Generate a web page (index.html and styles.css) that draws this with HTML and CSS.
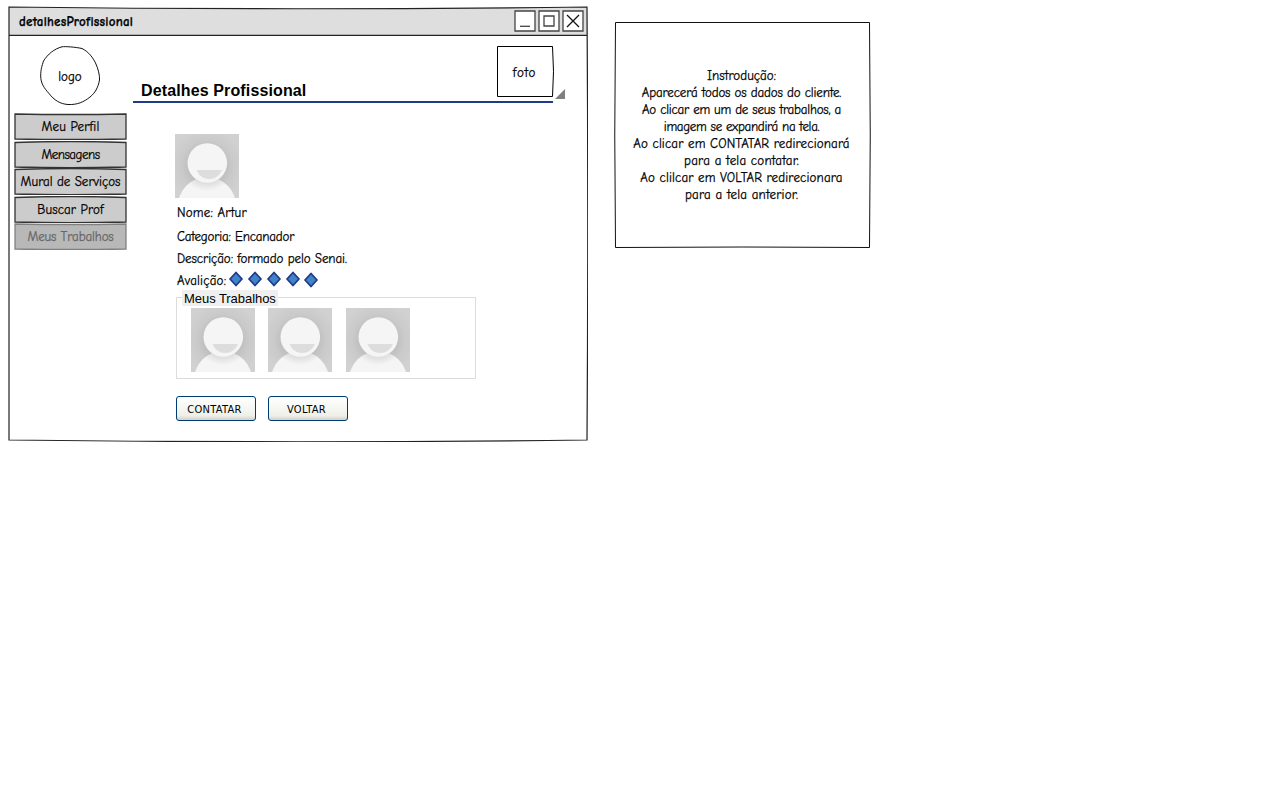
FILE: index.html
```html
<!DOCTYPE html>
<html lang="pt-BR">
<head>
<meta charset="utf-8">
<title>detalhesProfissional</title>
<link rel="stylesheet" href="styles.css">
</head>
<body>
<svg class="defs" width="0" height="0" aria-hidden="true">
  <defs>
    <radialGradient id="backdrop" gradientUnits="userSpaceOnUse" cx="32" cy="32" r="42">
      <stop offset="0.45" stop-color="#c0c0c0"/>
      <stop offset="0.62" stop-color="#cacaca"/>
      <stop offset="0.9" stop-color="#d1d1d1"/>
    </radialGradient>
    <radialGradient id="body" gradientUnits="userSpaceOnUse" cx="32" cy="30" r="32">
      <stop offset="0.6" stop-color="#dedede"/>
      <stop offset="0.85" stop-color="#f5f5f5"/>
    </radialGradient>
    <symbol id="avatar" viewBox="0 0 64 64">
      <rect width="64" height="64" fill="url(#backdrop)"/>
      <circle cx="32" cy="72" r="29" fill="url(#body)"/>
      <circle cx="32.300" cy="29" r="19.800" fill="#f5f5f5"/>
      <path d="M21.500 36 H47 C44 42 40 45 34.300 45 S24 42 21.500 36 Z" fill="#dddddd"/>
    </symbol>
    <symbol id="diamond" viewBox="0 0 16 16">
      <path d="M8 1.500 L14 8 L8 14.500 L2 8 Z" fill="#3f83cb" stroke="#223a85" stroke-width="1.800" stroke-linejoin="round"/>
    </symbol>
    <symbol id="plate" viewBox="0 0 113 27">
      <path d="M1 1 Q56 2 112 1 V26 Q56 27 1 26 Z"/>
    </symbol>
    <symbol id="plate-high" viewBox="0 0 113 27">
      <path d="M1 1.500 Q56 -.5 112 1.500 V26 Q56 27.500 1 26 Z"/>
    </symbol>
  </defs>
</svg>
<div class="board">
  <section class="window">
    <svg class="sketch" viewBox="8 6 580 436">
      <path d="M9 7 Q300 10.500 587 7 L587.500 35.500 H9 Z" fill="#dedede"/>
      <path d="M9 7 Q300 10.500 587 7 Q588.500 220 587 440 Q300 443.500 9 440 Z M9 35.300 H587.500" fill="none" stroke="#222" stroke-width="1.200"/>
    </svg>
    <header class="titlebar">
      <span class="hand caption">detalhesProfissional</span>
      <div class="controls">
        <svg viewBox="0 0 22 22"><path d="M1 1 H21 V21 H1 Z" class="key"/><path d="M6 16.300 H16" class="mark"/></svg>
        <svg viewBox="0 0 22 22"><path d="M1 1 H21 V21 H1 Z" class="key"/><path d="M6 6 H16 V16 H6 Z" class="mark"/></svg>
        <svg viewBox="0 0 22 22"><path d="M1 1 H21 V21 H1 Z" class="key"/><path d="M5 5 L17 17 M17 5 L5 17" class="mark cross"/></svg>
      </div>
    </header>
    <div class="content">
      <aside class="side">
        <div class="logo">
          <svg class="sketch" viewBox="0 0 60 60"><path d="M22 .8 C25 .3 35 1 42 2.500 C49 6 53 12 55.500 17 C58 22 60 30 59.500 34 C58 42 55 47 50 51 C44 56 37 59 28 58.500 C20 58 14 54 9 47.500 C4 42 .7 37 .7 30 C.7 23 2 20 3.500 15 C8 8 14 3 22 .8 Z" fill="#fff" stroke="#111"/></svg>
          <span class="hand">logo</span>
        </div>
        <nav class="menu">
          <a class="hand item w-perfil"><svg class="sketch"><use href="#plate"/></svg>Meu Perfil</a>
          <a class="hand item w-mensagens"><svg class="sketch"><use href="#plate-high"/></svg>Mensagens</a>
          <a class="hand item"><svg class="sketch"><use href="#plate-high"/></svg>Mural de Serviços</a>
          <a class="hand item w-buscar"><svg class="sketch"><use href="#plate-high"/></svg>Buscar Prof</a>
          <a class="hand item off w-trab"><svg class="sketch"><use href="#plate"/></svg>Meus Trabalhos</a>
        </nav>
      </aside>
      <main class="main">
        <div class="heading">
          <h1>Detalhes Profissional</h1>
          <div class="foto">
            <svg class="sketch" viewBox="0 0 57 52"><path d="M.5 .5 H55.500 Q57.500 25 55.500 50.500 H.5 Z" fill="#fff" stroke="#000"/></svg>
            <span class="hand w-foto">foto</span>
          </div>
          <svg class="grip" viewBox="0 0 10 10"><path d="M10 0 V10 H0 Z" fill="#808080"/></svg>
        </div>
        <div class="profile">
          <svg class="avatar"><use href="#avatar"/></svg>
          <p class="hand nome">Nome: Artur</p>
          <p class="hand categoria">Categoria: Encanador</p>
          <p class="hand descricao">Descrição: formado pelo Senai.</p>
          <div class="rating">
            <span class="hand">Avalição:</span>
            <svg><use href="#diamond"/></svg><svg><use href="#diamond"/></svg><svg><use href="#diamond"/></svg><svg><use href="#diamond"/></svg><svg class="last"><use href="#diamond"/></svg>
          </div>
          <section class="works">
            <h2>Meus Trabalhos</h2>
            <div class="thumbs">
              <svg class="avatar"><use href="#avatar"/></svg>
              <svg class="avatar"><use href="#avatar"/></svg>
              <svg class="avatar"><use href="#avatar"/></svg>
            </div>
          </section>
          <div class="actions">
            <button>CONTATAR</button>
            <button>VOLTAR</button>
          </div>
        </div>
      </main>
    </div>
  </section>
  <aside class="note">
    <svg class="sketch" viewBox="0 0 257 227"><path d="M1.500 .5 H255.500 Q257 113 255.500 225.500 Q128 224.500 1.500 225.500 Q0 113 1.500 .5 Z" fill="#fff" stroke="#111"/></svg>
    <p class="hand">
      <span class="n1">Instrodução:</span>
      <span class="n2">Aparecerá todos os dados do cliente.</span>
      <span class="n3">Ao clicar em um de seus trabalhos, a</span>
      <span class="n4">imagem se expandirá na tela.</span>
      <span class="n5">Ao clicar em CONTATAR redirecionará</span>
      <span class="n6">para a tela contatar.</span>
      <span class="n7">Ao clilcar em VOLTAR redirecionara</span>
      <span class="n8">para a tela anterior.</span>
    </p>
  </aside>
</div>
</body>
</html>
```
FILE: styles.css
```css
* { box-sizing: border-box; }
body { margin: 0; background: #fff; color: #000; }
h1, h2, p { margin: 0; font-weight: normal; }
.defs { display: block; }
.board { display: flex; align-items: flex-start; padding: 6px 8px; }
.hand { font: 13px/17px "Comic Sans MS", "Comic Neue", "Noto Sans", sans-serif; white-space: nowrap; -webkit-text-stroke: .25px currentColor; }
.sketch { position: absolute; inset: 0; width: 100%; height: 100%; z-index: -1; }
.window, .note, .logo, .foto, .item { position: relative; z-index: 0; }

.window { width: 580px; height: 436px; }
.titlebar { display: flex; justify-content: space-between; align-items: center; height: 30px; padding: 0 4px 0 11px; }
.caption { font-weight: bold; letter-spacing: .23px; }
.controls { display: flex; gap: 2px; }
.controls svg { display: block; width: 22px; height: 22px; }
.key { fill: #fff; stroke: #444; stroke-width: 1.3; }
.mark { fill: none; stroke: #444; stroke-width: 1.3; }
.cross { stroke: #111; }

.content { display: flex; }
.side { width: 125px; padding: 10px 6px 0; }
.logo { display: flex; align-items: center; justify-content: center; width: 60px; height: 60px; margin-left: 26px; }
.menu { display: flex; flex-direction: column; gap: .5px; width: 113px; margin-top: 7px; }
.item { display: flex; align-items: center; justify-content: center; height: 27px; fill: #ccc; stroke: #333; stroke-width: 1.3; }
.off { fill: #b8b8b8; stroke: #808080; color: #666; }
.w-perfil { letter-spacing: .17px; }
.w-mensagens { letter-spacing: -.5px; }
.w-buscar { letter-spacing: .1px; }
.w-trab { letter-spacing: -.12px; }

.main { width: 440px; }
.heading { position: relative; display: flex; justify-content: space-between; width: 420px; height: 67px; padding: 10px 0 0 8px; border-bottom: 2px solid #223a85; }
h1 { align-self: flex-end; font: bold 16px/20px "Liberation Sans", Arial, sans-serif; letter-spacing: .13px; }
.foto { display: flex; align-items: center; justify-content: center; width: 57px; height: 52px; margin-right: -1px; padding-right: 2px; }
.w-foto { letter-spacing: .8px; }
.grip { position: absolute; right: -12px; top: 53px; width: 10px; height: 10px; }
.profile { padding: 31px 0 0 42px; }
.avatar { display: block; width: 64px; height: 64px; }
.profile > p { padding-left: 2px; }
.nome { margin-top: 6px; letter-spacing: .2px; }
.categoria { margin-top: 7px; letter-spacing: -.17px; }
.descricao { margin-top: 5px; letter-spacing: -.07px; }
.rating { display: flex; align-items: center; height: 17px; margin-top: 5px; padding-left: 2px; }
.rating .hand { width: 51px; letter-spacing: .2px; }
.rating svg { width: 16px; height: 18px; margin-right: 3px; margin-top: -4px; }
.rating .last { margin-left: -1px; margin-top: -2px; }
.works { width: 300px; height: 82px; margin: 8px 0 0 1px; border: 1px solid #dcdcdc; }
h2 { width: 96px; height: 16px; margin: -8px 0 0 5px; padding-left: 2px; background: #efefef; font: 13px/17px "Liberation Sans", Arial, sans-serif; white-space: nowrap; letter-spacing: -.05px; }
.thumbs { display: flex; gap: 13px; margin: 2px 0 0 14px; }
.thumbs .avatar:last-child { margin-left: 1px; }
.actions { display: flex; gap: 12px; margin: 17px 0 0 1px; }
button { width: 80px; height: 25px; padding: 2px 3px 0 0; border: 1px solid #003c74; border-radius: 3px; background: linear-gradient(#fff, #f0f0ea 80%, #d6d0c5); color: #000; font: 11px/17px Tahoma, "DejaVu Sans Condensed", sans-serif; letter-spacing: .3px; }

.note { width: 257px; height: 227px; margin: 16px 0 0 26px; padding: 45px 2px 0 0; }
.note p { display: flex; flex-direction: column; align-items: center; }
.n2 { letter-spacing: -.13px; }
.n3 { letter-spacing: -.22px; }
.n4 { letter-spacing: -.3px; }
.n5, .n7 { letter-spacing: .14px; }
.n6, .n8 { letter-spacing: .2px; }
```
